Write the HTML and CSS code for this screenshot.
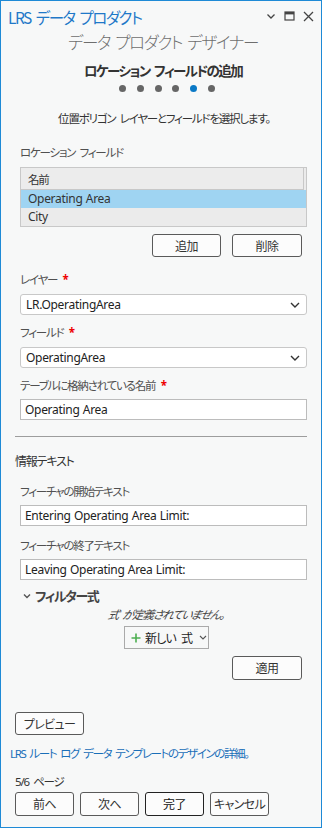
FILE: index.html
```html
<!DOCTYPE html>
<html lang="ja">
<head>
<meta charset="utf-8">
<link rel="stylesheet" href="styles.css">
</head>
<body>
<div class="pane">
  <div class="titlebar">
    <span class="title">LRS データ プロダクト</span>
    <div class="winicons">
      <svg width="10" height="10" viewBox="0 0 10 10"><path d="M1.5 3.5 L5 7 L8.5 3.5" fill="none" stroke="#444" stroke-width="1.3"/></svg>
      <svg width="11" height="10" viewBox="0 0 11 10"><rect x="1" y="1" width="9" height="8" fill="none" stroke="#444" stroke-width="1.2"/><rect x="1" y="1" width="9" height="2.4" fill="#444"/></svg>
      <svg width="11" height="11" viewBox="0 0 11 11"><path d="M1 1 L10 10 M10 1 L1 10" stroke="#444" stroke-width="1.3"/></svg>
    </div>
  </div>
  <div class="designer">データ プロダクト デザイナー</div>
  <div class="steptitle">ロケーション フィールドの追加</div>
  <div class="dots"><span class="dot"></span><span class="dot"></span><span class="dot"></span><span class="dot"></span><span class="dot active"></span><span class="dot"></span></div>
  <div class="instr">位置ポリゴン レイヤーとフィールドを選択します。</div>

  <div class="section">
    <div class="label lf">ロケーション フィールド</div>
    <div class="table">
      <div class="thead"><span>名前</span></div>
      <div class="row selected latin">Operating Area</div>
      <div class="row latin">City</div>
    </div>
    <div class="btnrow">
      <button class="btn w69">追加</button>
      <button class="btn w70">削除</button>
    </div>

    <div class="label l1">レイヤー <span class="req">*</span></div>
    <div class="select"><span class="latin">LR.OperatingArea</span><svg width="10" height="6" viewBox="0 0 10 6"><path d="M1 1 L5 5 L9 1" fill="none" stroke="#333" stroke-width="1.4"/></svg></div>
    <div class="label l2">フィールド <span class="req">*</span></div>
    <div class="select"><span class="latin">OperatingArea</span><svg width="10" height="6" viewBox="0 0 10 6"><path d="M1 1 L5 5 L9 1" fill="none" stroke="#333" stroke-width="1.4"/></svg></div>
    <div class="label l2">テーブルに格納されている名前 <span class="req">*</span></div>
    <div class="input latin">Operating Area</div>
  </div>

  <div class="sep"></div>
  <div class="infohead">情報テキスト</div>

  <div class="section">
    <div class="label l3">フィーチャの開始テキスト</div>
    <div class="input latin">Entering Operating Area Limit:</div>
    <div class="label l4">フィーチャの終了テキスト</div>
    <div class="input latin">Leaving Operating Area Limit:</div>
    <div class="filterhead">
      <svg width="8" height="6" viewBox="0 0 8 6"><path d="M1 1.5 L4 4.5 L7 1.5" fill="none" stroke="#555" stroke-width="1.4"/></svg>
      <span>フィルター式</span>
    </div>
    <div class="noexpr"><span class="ital">式 が定義されていません。</span></div>
    <div class="center">
      <div class="newexpr">
        <svg width="10" height="10" viewBox="0 0 10 10"><path d="M5 0.5 V9.5 M0.5 5 H9.5" stroke="#4caf50" stroke-width="1.6"/></svg>
        <span>新しい 式</span>
        <svg width="8" height="5" viewBox="0 0 8 5"><path d="M1 1 L4 4 L7 1" fill="none" stroke="#555" stroke-width="1.1"/></svg>
      </div>
    </div>
    <div class="btnrow apply">
      <button class="btn w70">適用</button>
    </div>
  </div>

  <div class="foot">
    <button class="btn w69 preview">プレビュー</button>
    <div class="link">LRS ルート ログ データ テンプレートのデザインの詳細。</div>
    <div class="page">5/6 ページ</div>
    <div class="navrow">
      <button class="btn nav">前へ</button>
      <button class="btn nav">次へ</button>
      <button class="btn nav primary">完了</button>
      <button class="btn nav">キャンセル</button>
    </div>
  </div>
</div>
</body>
</html>
```

FILE: styles.css
```css
* { box-sizing: border-box; }
html, body { margin: 0; padding: 0; }
body {
  width: 322px;
  height: 828px;
  font-family: "Noto Sans", "Noto Sans CJK JP", sans-serif;
  font-size: 11.5px;
  letter-spacing: -1.2px;
  word-spacing: 2.5px;
  color: #333;
  background: #f7f8f8;
  overflow: hidden;
  font-feature-settings: "palt";
}
.latin {
  font-size: 12px;
  letter-spacing: -0.3px;
  word-spacing: 0.5px;
}
.pane {
  width: 322px;
  height: 828px;
  border: 1px solid #1e8ad6;
  background: #f7f8f8;
}
.titlebar {
  height: 30px;
  display: flex;
  align-items: center;
  justify-content: space-between;
  padding: 0 7px 0 7px;
}
.title {
  color: #1f78c8;
  font-size: 15.5px;
  letter-spacing: -1.5px;
  word-spacing: 3px;
  line-height: 20px;
  font-family: "Noto Sans CJK JP", sans-serif;
  margin-top: 1px;
}
.winicons {
  display: flex;
  align-items: center;
  gap: 8px;
}
.designer {
  text-align: center;
  font-size: 16.5px;
  letter-spacing: -1.4px;
  word-spacing: 3px;
  line-height: 22px;
  color: #6e6e6e;
  font-weight: 300;
  font-family: "Noto Sans CJK JP", sans-serif;
  padding-left: 4px;
}
.steptitle {
  text-align: center;
  font-size: 13.5px;
  letter-spacing: -1.6px;
  word-spacing: 3px;
  font-weight: 700;
  line-height: 20px;
  margin-top: 7px;
  color: #333;
  font-family: "Noto Sans CJK JP", sans-serif;
  padding-left: 4px;
}
.dots {
  display: flex;
  justify-content: center;
  gap: 10.8px;
  margin-top: 5px;
  height: 7px;
  padding-left: 12px;
}
.dot {
  width: 7px;
  height: 7px;
  border-radius: 50%;
  background: #666;
}
.dot.active { background: #0a79c6; }
.instr {
  text-align: center;
  margin-top: 18px;
  line-height: 18px;
  color: #333;
  padding-left: 6px;
}
.section {
  padding: 0 14px 0 19px;
}
.label {
  line-height: 18px;
  color: #505050;
}
.lf { margin-top: 16px; }
.l1 { margin-top: 14px; }
.l2 { margin-top: 9px; }
.l3 { margin-top: 12px; }
.l4 { margin-top: 11px; }
.req { color: #e00; font-weight: 700; margin-left: 1px; }
.table {
  margin-top: 5px;
  border: 1px solid #c8c8c8;
  background: #ebebeb;
}
.thead {
  height: 22px;
  border-bottom: 1px solid #c8c8c8;
  background: #ececec;
  display: flex;
  align-items: center;
  padding-left: 7px;
  margin-right: 2px;
  border-right: 1px solid #c8c8c8;
}
.row {
  height: 18px;
  line-height: 18px;
  padding-left: 7px;
  color: #333;
}
.row.selected { background: #9fd4f2; }
.btnrow {
  display: flex;
  justify-content: flex-end;
  gap: 11px;
  margin-top: 7px;
  padding-right: 5px;
}
.btn {
  height: 23px;
  border: 1px solid #5a5a5a;
  border-radius: 3px;
  background: #fcfcfc;
  font-family: "Noto Sans CJK JP", sans-serif;
  font-feature-settings: "palt";
  font-size: 12px;
  letter-spacing: -0.6px;
  color: #333;
  padding: 0;
  line-height: 20px;
  white-space: nowrap;
}
.w69 { width: 69px; }
.w70 { width: 70px; }
.select {
  margin-top: 5px;
  height: 21px;
  border: 1px solid #c8c8c8;
  border-radius: 3px;
  background: #fff;
  display: flex;
  align-items: center;
  justify-content: space-between;
  padding: 0 6px 0 5px;
  color: #222;
}
.input {
  margin-top: 4px;
  height: 21px;
  border: 1px solid #bcbcbc;
  background: #fff;
  display: flex;
  align-items: center;
  padding-left: 4px;
  color: #222;
}
.sep {
  margin: 16px 14px 0 14px;
  height: 1px;
  background: #9d9d9d;
}
.infohead {
  margin-top: 16px;
  padding-left: 14px;
  line-height: 18px;
  font-size: 12px;
  color: #333;
}
.filterhead {
  margin-top: 7px;
  display: flex;
  align-items: center;
  gap: 4px;
  line-height: 18px;
  padding-left: 3px;
  font-size: 13px;
  letter-spacing: -1.4px;
  font-weight: 700;
  color: #444;
  font-family: "Noto Sans CJK JP", sans-serif;
}
.noexpr {
  text-align: center;
  line-height: 18px;
  color: #444;
  padding-left: 6px;
  margin-top: 1px;
}
.ital {
  display: inline-block;
  transform: skewX(-12deg);
  font-style: italic;
}
.center {
  display: flex;
  justify-content: center;
  margin-top: 2px;
  padding-left: 6px;
}
.newexpr {
  height: 23px;
  width: 85px;
  border: 1px solid #aaa;
  background: #f7f8f8;
  display: flex;
  align-items: center;
  gap: 4px;
  padding-left: 6px;
  color: #222;
  white-space: nowrap;
  font-size: 12px;
  letter-spacing: -0.8px;
}
.newexpr svg:last-child { margin-left: 3px; }
.apply { margin-top: 7px; }
.apply .btn { height: 24px; }
.foot {
  padding: 0 0 0 14px;
}
.preview { margin-top: 32px; display: block; }
.link {
  margin-top: 10px;
  margin-left: -5px;
  line-height: 18px;
  color: #1a6fb8;
  letter-spacing: -1.4px;
}
.page {
  margin-top: 10px;
  line-height: 18px;
  color: #333;
}
.navrow {
  margin-top: 1px;
  display: flex;
  gap: 6px;
}
.nav { width: 59px; height: 24px; }
.primary { border-color: #222; color: #111; }
```
